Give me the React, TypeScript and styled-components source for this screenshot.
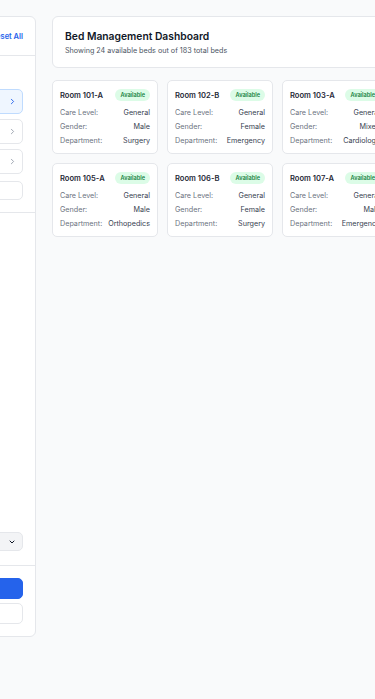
import React from 'react';
import styled, { createGlobalStyle } from 'styled-components';
import { ChevronRight, ChevronDown } from 'lucide-react';

const beds = [
  { room: 'Room 101-A', care: 'General', gender: 'Male', dept: 'Surgery' },
  { room: 'Room 102-B', care: 'General', gender: 'Female', dept: 'Emergency' },
  { room: 'Room 103-A', care: 'General', gender: 'Mixed', dept: 'Cardiology' },
  { room: 'Room 104-B', care: 'General', gender: 'Female', dept: 'Pediatrics' },
  { room: 'Room 105-A', care: 'General', gender: 'Male', dept: 'Orthopedics' },
  { room: 'Room 106-B', care: 'General', gender: 'Female', dept: 'Surgery' },
  { room: 'Room 107-A', care: 'General', gender: 'Male', dept: 'Emergency' },
];

const filters = [
  { label: 'Care Level', active: true },
  { label: 'Gender', active: false },
  { label: 'Department', active: false },
];

const GlobalStyle = createGlobalStyle`
  html, body {
    margin: 0;
    padding: 0;
    background: #f9fafb;
    overflow: hidden;
  }
  body {
    font-family: Inter, "Liberation Sans", sans-serif;
    color: #111827;
  }
  * { box-sizing: border-box; }
`;

const Layout = styled.div`
  display: flex;
  align-items: flex-start;
  gap: 16px;
  padding: 16px;
  margin-left: -200px;
  width: max-content;
`;

const Sidebar = styled.aside`
  width: 220px;
  height: 621px;
  background: #fff;
  border: 1px solid #e5e7eb;
  border-radius: 6px;
  display: flex;
  flex-direction: column;
`;

const SidebarHeader = styled.div`
  height: 39px;
  padding: 0 12px;
  display: flex;
  align-items: center;
  justify-content: space-between;
  border-bottom: 1px solid #e5e7eb;
`;

const SidebarTitle = styled.span`
  font-size: 10px;
  font-weight: 600;
`;

const ResetLink = styled.button`
  border: none;
  background: none;
  padding: 0;
  font-family: inherit;
  font-size: 7.5px;
  font-weight: 600;
  color: #2563eb;
`;

const FilterSection = styled.div`
  padding: 12px 12px 12px;
  display: flex;
  flex-direction: column;
  gap: 5px;
  border-bottom: 1px solid #e5e7eb;
`;

const SectionLabel = styled.div`
  font-size: 7px;
  font-weight: 600;
  color: #6b7280;
  text-transform: uppercase;
  height: 14px;
  margin-bottom: 2px;
`;

const FilterItem = styled.div<{ $active?: boolean }>`
  height: 25px;
  padding: 0 5px 0 10px;
  display: flex;
  align-items: center;
  justify-content: space-between;
  font-size: 8px;
  border-radius: 5px;
  border: 1px solid ${(p) => (p.$active ? '#bfdbfe' : '#e5e7eb')};
  background: ${(p) => (p.$active ? '#eff6ff' : '#fff')};
  color: ${(p) => (p.$active ? '#1d4ed8' : '#374151')};
  svg {
    color: ${(p) => (p.$active ? '#2563eb' : '#9ca3af')};
  }
`;

const SearchBox = styled.input`
  height: 19px;
  margin-top: 2px;
  border: 1px solid #e5e7eb;
  border-radius: 5px;
  padding: 0 8px;
  font-family: inherit;
  font-size: 7.5px;
  background: #fff;
  outline: none;
`;

const SidebarFooter = styled.div`
  margin-top: auto;
  display: flex;
  flex-direction: column;
`;

const SortRow = styled.div`
  padding: 0 12px 14px;
  border-bottom: 1px solid #e5e7eb;
`;

const SelectBox = styled.div`
  height: 19px;
  border: 1px solid #e5e7eb;
  border-radius: 5px;
  background: #f3f4f6;
  padding: 0 6px 0 8px;
  display: flex;
  align-items: center;
  justify-content: space-between;
  font-size: 7.5px;
  color: #374151;
  svg { color: #111827; }
`;

const Actions = styled.div`
  padding: 12px 12px 12px;
  display: flex;
  flex-direction: column;
  gap: 4px;
`;

const ActionButton = styled.button<{ $primary?: boolean }>`
  height: 21px;
  border-radius: 5px;
  font-family: inherit;
  font-size: 7.5px;
  font-weight: 600;
  border: 1px solid ${(p) => (p.$primary ? '#2563eb' : '#e5e7eb')};
  background: ${(p) => (p.$primary ? '#2563eb' : '#fff')};
  color: ${(p) => (p.$primary ? '#fff' : '#374151')};
`;

const Main = styled.main`
  display: flex;
  flex-direction: column;
  gap: 12px;
  width: 451px;
`;

const HeaderCard = styled.header`
  height: 52px;
  background: #fff;
  border: 1px solid #e5e7eb;
  border-radius: 6px;
  padding: 0 12px;
  display: flex;
  align-items: center;
  justify-content: space-between;
`;

const Title = styled.h1`
  margin: 0 0 4px;
  font-size: 10.3px;
  font-weight: 600;
  color: #111827;
`;

const Subtitle = styled.p`
  margin: 0;
  font-size: 7.2px;
  color: #4b5563;
`;

const ViewControl = styled.div`
  display: flex;
  align-items: center;
  gap: 4px;
  font-size: 7.5px;
  color: #4b5563;
`;

const ViewToggle = styled.div`
  width: 60px;
  height: 16px;
  border: 1px solid #e5e7eb;
  border-radius: 5px;
  background: #f3f4f6;
`;

const Grid = styled.div`
  display: grid;
  grid-template-columns: repeat(4, 106px);
  gap: 9px;
`;

const BedCard = styled.div`
  background: #fff;
  border: 1px solid #e5e7eb;
  border-radius: 5px;
  padding: 8px 7px 6px;
`;

const CardTop = styled.div`
  height: 12px;
  display: flex;
  align-items: center;
  justify-content: space-between;
  margin-bottom: 4px;
`;

const RoomName = styled.span`
  font-size: 7.6px;
  font-weight: 600;
  color: #1f2937;
`;

const Badge = styled.span`
  height: 12px;
  padding: 0 5px;
  border-radius: 999px;
  background: #dcfce7;
  color: #15803d;
  font-size: 5.6px;
  font-weight: 600;
  display: flex;
  align-items: center;
`;

const InfoRow = styled.div`
  height: 14px;
  display: flex;
  align-items: center;
  justify-content: space-between;
  font-size: 7.2px;
`;

const InfoLabel = styled.span`
  color: #6b7280;
`;

const InfoValue = styled.span`
  color: #374151;
`;

export default function App() {
  return (
    <>
      <GlobalStyle />
      <Layout>
        <Sidebar>
          <SidebarHeader>
            <SidebarTitle>Filters</SidebarTitle>
            <ResetLink>Reset All</ResetLink>
          </SidebarHeader>
          <FilterSection>
            <SectionLabel>Bed Criteria</SectionLabel>
            {filters.map((f) => (
              <FilterItem key={f.label} $active={f.active}>
                <span>{f.label}</span>
                <ChevronRight size={9} strokeWidth={2.5} />
              </FilterItem>
            ))}
            <SearchBox placeholder="" />
          </FilterSection>
          <SidebarFooter>
            <SortRow>
              <SelectBox>
                <span>Sort by room</span>
                <ChevronDown size={8} strokeWidth={3} />
              </SelectBox>
            </SortRow>
            <Actions>
              <ActionButton $primary>Apply Filters</ActionButton>
              <ActionButton>Clear</ActionButton>
            </Actions>
          </SidebarFooter>
        </Sidebar>

        <Main>
          <HeaderCard>
            <div>
              <Title>Bed Management Dashboard</Title>
              <Subtitle>Showing 24 available beds out of 183 total beds</Subtitle>
            </div>
            <ViewControl>
              <span>View:</span>
              <ViewToggle />
            </ViewControl>
          </HeaderCard>

          <Grid>
            {beds.map((b) => (
              <BedCard key={b.room}>
                <CardTop>
                  <RoomName>{b.room}</RoomName>
                  <Badge>Available</Badge>
                </CardTop>
                <InfoRow>
                  <InfoLabel>Care Level:</InfoLabel>
                  <InfoValue>{b.care}</InfoValue>
                </InfoRow>
                <InfoRow>
                  <InfoLabel>Gender:</InfoLabel>
                  <InfoValue>{b.gender}</InfoValue>
                </InfoRow>
                <InfoRow>
                  <InfoLabel>Department:</InfoLabel>
                  <InfoValue>{b.dept}</InfoValue>
                </InfoRow>
              </BedCard>
            ))}
          </Grid>
        </Main>
      </Layout>
    </>
  );
}
